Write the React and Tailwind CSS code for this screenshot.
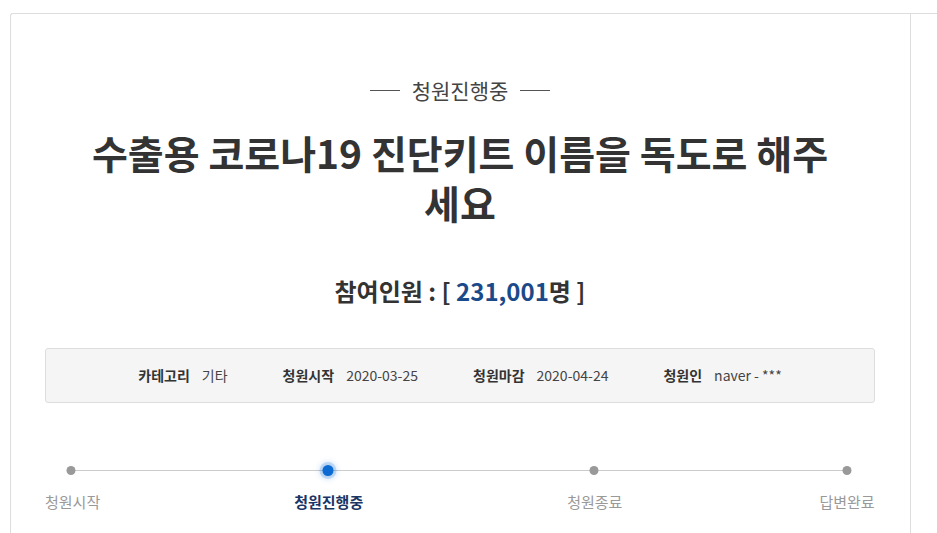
import React from "react";

const font = { fontFamily: "'Noto Sans CJK KR', 'Noto Sans', sans-serif" };

function InfoItem({ label, value }) {
  return (
    <div className="flex items-center gap-[12px] whitespace-nowrap">
      <span className="font-bold text-[#333]">{label}</span>
      <span className="text-[#444]">{value}</span>
    </div>
  );
}

export default function App() {
  const dots = [
    { x: 26, active: false },
    { x: 283, active: true },
    { x: 549, active: false },
    { x: 802, active: false },
  ];
  return (
    <div className="flex h-screen w-full flex-col overflow-hidden bg-white pl-[10px] pt-[13px]" style={font}>
      <div className="flex w-[1000px] flex-1 rounded-tl-[3px] border-l border-t border-[#dddddd]">
        <div className="w-[900px] shrink-0 border-r border-[#dddddd] pb-[40px] pl-[34px] pr-[35px] pt-[62px]">
          <div className="flex items-center justify-center gap-[12px] text-[21px] leading-[28px] text-[#444]">
            <span className="h-px w-[30px] bg-[#555]" />
            <span>청원진행중</span>
            <span className="h-px w-[30px] bg-[#555]" />
          </div>
          <h1 className="mx-auto mt-[23px] w-[760px] text-center text-[39px] font-bold leading-[50px] text-[#333]">
            수출용 코로나19 진단키트 이름을 독도로 해주세요
          </h1>
          <div className="mt-[47px] text-center text-[24px] font-bold leading-[34px] text-[#333]">
            참여인원 : [ <span className="text-[#1b4a8a]">231,001</span>명 ]
          </div>
          <div className="mt-[40px] flex h-[55px] items-center justify-center gap-[55px] rounded-[3px] border border-[#dddddd] bg-[#f5f5f5] text-[14px]">
            <InfoItem label="카테고리" value="기타" />
            <InfoItem label="청원시작" value="2020-03-25" />
            <InfoItem label="청원마감" value="2020-04-24" />
            <InfoItem label="청원인" value="naver - ***" />
          </div>
          <div className="relative mt-[62px] h-[11px]">
            <div className="absolute left-[26px] right-[28px] top-[5px] h-px bg-[#cccccc]" />
            {dots.map((d, i) =>
              d.active ? (
                <span
                  key={i}
                  className="absolute top-0 h-[11px] w-[11px] -translate-x-1/2 rounded-full bg-[#0b6bd3] shadow-[0_0_0_3px_rgba(11,107,211,0.18),0_0_6px_3px_rgba(11,107,211,0.2)]"
                  style={{ left: d.x }}
                />
              ) : (
                <span
                  key={i}
                  className="absolute top-[1px] h-[9px] w-[9px] -translate-x-1/2 rounded-full bg-[#999999]"
                  style={{ left: d.x }}
                />
              )
            )}
          </div>
          <div className="mt-[16px] flex whitespace-nowrap text-[15px] leading-[20px]">
            <span className="shrink-0 text-[#999]">청원시작</span>
            <span className="ml-[194px] shrink-0 font-bold text-[#1a3565]">청원진행중</span>
            <span className="ml-[204px] shrink-0 text-[#999]">청원종료</span>
            <span className="ml-[197px] shrink-0 text-[#999]">답변완료</span>
          </div>
        </div>
        <div className="flex-1" />
      </div>
    </div>
  );
}
